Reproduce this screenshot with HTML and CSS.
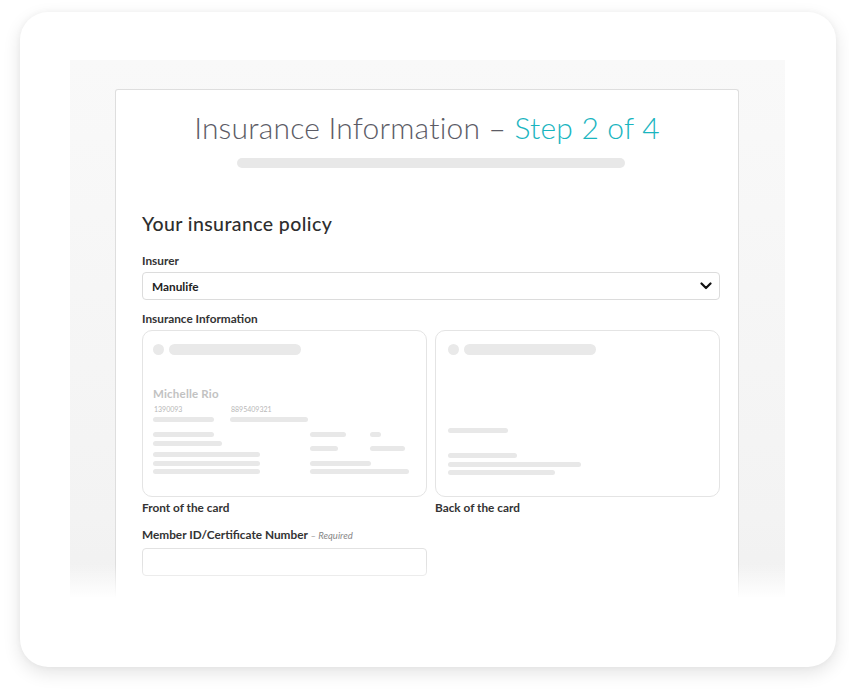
FILE: index.html
```html
<!DOCTYPE html>
<html lang="en">
<head>
<meta charset="utf-8">
<title>Insurance Information</title>
<link rel="stylesheet" href="styles.css">
</head>
<body>
<div class="frame">
  <div class="stage">
    <div class="panel">
      <h1 class="title">Insurance Information – <span class="accent">Step 2 of 4</span></h1>
      <div class="progress"></div>

      <h2 class="section">Your insurance policy</h2>

      <div class="label">Insurer</div>
      <div class="select">
        <span>Manulife</span>
        <svg class="chev" width="12" height="8" viewBox="0 0 12 8"><path d="M1.5 1.5 L6 6 L10.5 1.5" fill="none" stroke="#111" stroke-width="2.2" stroke-linecap="round" stroke-linejoin="round"/></svg>
      </div>

      <div class="label label-gap">Insurance Information</div>
      <div class="cards">
        <div class="card-col">
          <div class="card front">
            <div class="card-head"><span class="dot"></span><span class="head-bar"></span></div>
            <div class="name">Michelle Rio</div>
            <div class="nums">
              <div class="num-col"><span class="num">1390093</span><span class="bar w61"></span></div>
              <div class="num-col"><span class="num">8895409321</span><span class="bar w78"></span></div>
            </div>
            <div class="lower">
              <div class="lower-left">
                <span class="bar w61"></span>
                <span class="bar w69 g4"></span>
                <span class="bar w107 g6"></span>
                <span class="bar w107 g4"></span>
                <span class="bar w107 g3"></span>
              </div>
              <div class="lower-right">
                <div class="pair"><span class="bar w36"></span><span class="bar w11"></span></div>
                <div class="pair g9"><span class="bar w28"></span><span class="bar w35"></span></div>
                <span class="bar w61 g10"></span>
                <span class="bar w99 g3"></span>
              </div>
            </div>
          </div>
          <div class="caption">Front of the card</div>
        </div>
        <div class="card-col">
          <div class="card back">
            <div class="card-head"><span class="dot"></span><span class="head-bar"></span></div>
            <span class="bar w60 back-first"></span>
            <span class="bar w69 g20"></span>
            <span class="bar w133 g4"></span>
            <span class="bar w107 g3"></span>
          </div>
          <div class="caption">Back of the card</div>
        </div>
      </div>

      <div class="label member">Member ID/Certificate Number <span class="req">– Required</span></div>
      <div class="input"></div>
    </div>
    <div class="fade"></div>
  </div>
</div>
</body>
</html>
```

FILE: styles.css
```css
* { box-sizing: border-box; }

html, body {
  margin: 0;
  padding: 0;
  background: #ffffff;
}

body {
  width: 849px;
  height: 689px;
  overflow: hidden;
  font-family: "Lato", "Open Sans", sans-serif;
  color: #333;
}

.frame {
  margin: 12px 0 0 20px;
  width: 816px;
  height: 655px;
  background: #fff;
  border-radius: 28px;
  box-shadow: 0 6px 18px rgba(0, 0, 0, 0.11), 0 0 6px rgba(0, 0, 0, 0.04);
  padding-top: 48px;
}

.stage {
  position: relative;
  margin-left: 50px;
  width: 715px;
  height: 538px;
  overflow: hidden;
  background: linear-gradient(to bottom, #f9f9f9 0%, #f3f3f3 85%, #f1f1f1 100%);
  padding: 29px 46px 0 45px;
}

.fade {
  position: absolute;
  left: 0;
  right: 0;
  bottom: 0;
  height: 34px;
  background: linear-gradient(to bottom, rgba(255, 255, 255, 0) 0%, #fff 100%);
}

.panel {
  height: 100%;
  background: #fff;
  border: 1px solid #dedede;
  border-bottom: none;
  border-radius: 3px 3px 0 0;
  padding: 19px 18px 0 26px;
}

.title {
  margin: 0 -18px 0 -26px;
  font-size: 30px;
  line-height: 36px;
  font-weight: 300;
  color: #5c5c66;
  text-align: center;
  letter-spacing: 0.2px;
}

.accent { color: #1ab5bf; }

.progress {
  width: 388px;
  height: 10px;
  margin: 13px auto 0;
  border-radius: 5px;
  background: #e8e8e8;
}

.section {
  margin: 45px 0 0;
  font-size: 19.5px;
  line-height: 22px;
  font-weight: 500;
  letter-spacing: 0.4px;
  color: #2e2e2e;
}

.label {
  margin-top: 19px;
  font-size: 11.8px;
  line-height: 14px;
  font-weight: 700;
  color: #333;
}

.label-gap { margin-top: 12px; }

.select {
  margin-top: 4px;
  height: 28px;
  border: 1px solid #dcdcdc;
  border-radius: 4px;
  display: flex;
  align-items: center;
  justify-content: space-between;
  padding: 0 7px 0 9px;
  font-size: 11.8px;
  font-weight: 700;
  color: #222;
}

.chev { display: block; }

.cards {
  margin-top: 4px;
  display: grid;
  grid-template-columns: 285px 285px;
  column-gap: 8px;
}

.card {
  height: 167px;
  border: 1px solid #e4e4e4;
  border-radius: 10px;
  padding: 13px 10px 0 10px;
  display: flex;
  flex-direction: column;
  align-items: flex-start;
}

.back { padding-left: 12px; }

.card-head {
  display: flex;
  gap: 5px;
  align-items: center;
}

.dot {
  width: 11px;
  height: 11px;
  border-radius: 50%;
  background: #e9e9e9;
}

.head-bar {
  width: 132px;
  height: 11px;
  border-radius: 6px;
  background: #e9e9e9;
}

.bar {
  display: block;
  height: 5px;
  border-radius: 3px;
  background: #e8e8e8;
}

.w11 { width: 11px; }
.w28 { width: 28px; }
.w35 { width: 35px; }
.w36 { width: 36px; }
.w60 { width: 60px; }
.w61 { width: 61px; }
.w69 { width: 69px; }
.w78 { width: 78px; }
.w99 { width: 99px; }
.w107 { width: 107px; }
.w133 { width: 133px; }

.g3 { margin-top: 3px; }
.g4 { margin-top: 4px; }
.g6 { margin-top: 6px; }
.g9 { margin-top: 9px; }
.g10 { margin-top: 10px; }
.g20 { margin-top: 20px; }

.name {
  margin-top: 32px;
  font-size: 11.5px;
  line-height: 13px;
  font-weight: 700;
  letter-spacing: 0.2px;
  color: #c2c2c2;
}

.nums {
  margin-top: 5px;
  display: grid;
  grid-template-columns: 77px auto;
}

.num-col {
  display: flex;
  flex-direction: column;
  gap: 3px;
}

.num {
  font-size: 7px;
  line-height: 9px;
  color: #b8b8b8;
  padding-left: 1px;
}

.lower {
  margin-top: 10px;
  display: grid;
  grid-template-columns: 157px auto;
}

.pair {
  display: grid;
  grid-template-columns: 60px auto;
}

.back-first { margin-top: 73px; }

.caption {
  margin-top: 4px;
  font-size: 11.8px;
  line-height: 14px;
  font-weight: 700;
  color: #333;
}

.member { margin-top: 13px; }

.req {
  font-size: 9.5px;
  font-style: italic;
  font-weight: 400;
  color: #888;
}

.input {
  margin-top: 5px;
  width: 285px;
  height: 28px;
  border: 1px solid #e2e2e2;
  border-radius: 4px;
}
```
